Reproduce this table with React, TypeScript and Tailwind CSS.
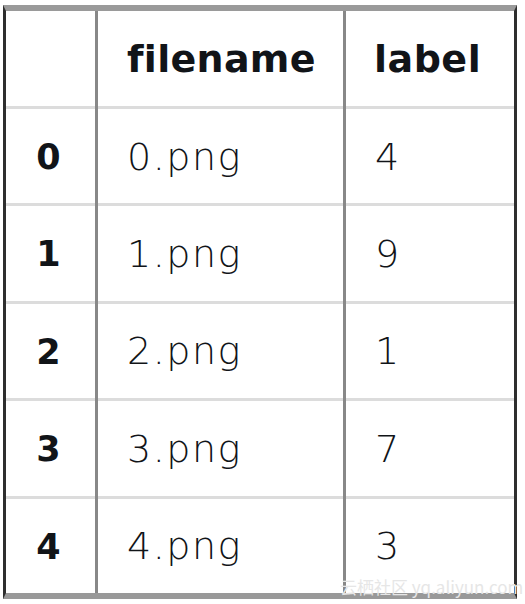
import React from "react";

const rows = [
  { i: "0", f: "0.png", l: "4" },
  { i: "1", f: "1.png", l: "9" },
  { i: "2", f: "2.png", l: "1" },
  { i: "3", f: "3.png", l: "7" },
  { i: "4", f: "4.png", l: "3" },
];

export default function App() {
  const font = { fontFamily: "'DejaVu Sans', Lato, sans-serif" };
  return (
    <div className="w-[525px] h-[604px] bg-white relative" style={font}>
      <div className="absolute left-0 top-0 w-full pt-[5px] pl-[3px]">
        <div className="w-[514px] border-l-[3px] border-r-[3px] border-l-[#2e2e2e] border-r-[#2e2e2e] border-t-[6px] border-b-[6px] border-t-[#9a9a9a] border-b-[#999999] flex text-[#111418]">
          <div className="w-[92px] flex flex-col border-r-[3px] border-r-[#888888]">
            <div className="h-[95px]" />
            {rows.map((r) => (
              <div
                key={r.i}
                className="h-[97.4px] border-t-[3px] border-t-[#dcdcdc] flex items-center justify-center text-[35px] font-bold pr-[4px] pt-[2px]"
              >
                {r.i}
              </div>
            ))}
          </div>
          <div className="w-[248px] flex flex-col border-r-[3px] border-r-[#888888]">
            <div className="h-[95px] flex items-center pl-[29px] text-[38px] font-bold tracking-[0.3px] pt-[2px]">
              filename
            </div>
            {rows.map((r) => (
              <div
                key={r.i}
                className="h-[97.4px] border-t-[3px] border-t-[#dcdcdc] flex items-center pl-[29px] text-[38px] font-extralight tracking-[1.5px] pt-[2px]"
              >
                {r.f}
              </div>
            ))}
          </div>
          <div className="w-[168px] flex flex-col">
            <div className="h-[95px] flex items-center pl-[28px] text-[38px] font-bold tracking-[0.5px] pt-[2px]">
              label
            </div>
            {rows.map((r) => (
              <div
                key={r.i}
                className="h-[97.4px] border-t-[3px] border-t-[#dcdcdc] flex items-center pl-[29px] text-[38px] font-extralight pt-[2px]"
              >
                {r.l}
              </div>
            ))}
          </div>
        </div>
      </div>
      <div
        className="absolute left-[340px] top-[574px] text-[17px] text-[#e6e6e6] whitespace-nowrap"
        style={{ fontFamily: "'Noto Sans CJK SC', sans-serif" }}
      >
        云栖社区 yq.aliyun.com
      </div>
    </div>
  );
}
